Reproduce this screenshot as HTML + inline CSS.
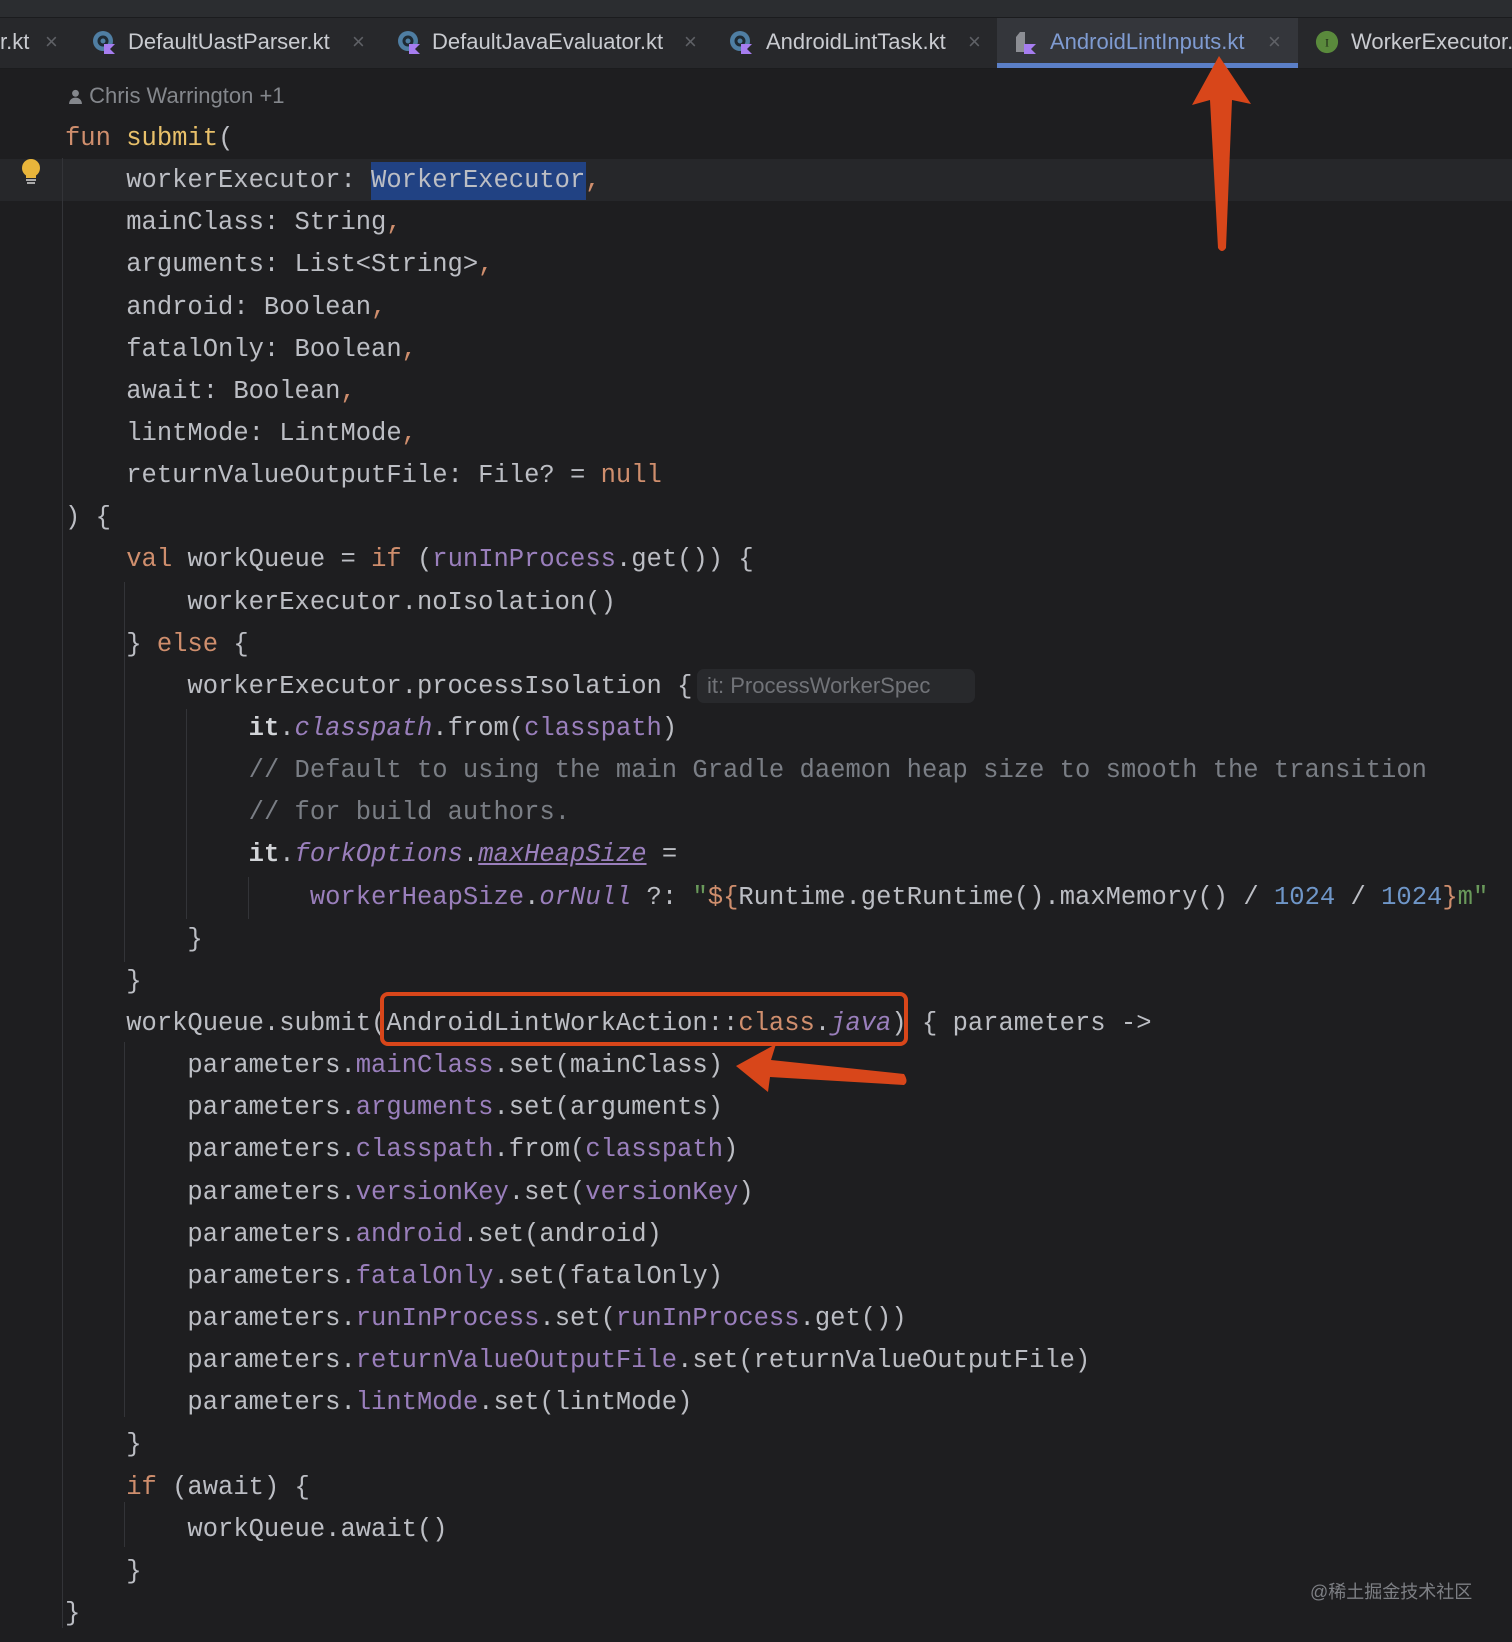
<!DOCTYPE html>
<html><head><meta charset="utf-8"><style>
html,body{margin:0;padding:0}
body{width:1512px;height:1642px;background:#1e1e20;position:relative;overflow:hidden;font-family:"Liberation Mono",monospace;}
.top{position:absolute;left:0;top:0;width:1512px;height:17px;background:#2b2d30;border-bottom:1px solid #1b1c1e}
.tabs{position:absolute;left:0;top:18px;width:1512px;height:50px;background:#27282b;border-bottom:1px solid #1b1c1e}
.tab{position:absolute;top:0;height:50px;line-height:48px;font-family:"Liberation Sans",sans-serif;font-size:22px;color:#c9cbd0;white-space:nowrap}
.x{position:absolute;top:0;font-family:"Liberation Sans",sans-serif;font-size:22px;color:#5f6166;line-height:48px}
.ic{position:absolute;top:12px;width:24px;height:24px}
.ln{position:absolute;left:65px;margin-top:2px;height:42px;line-height:42px;font-size:25.5px;color:#bcbec4;white-space:pre}
.k{color:#cf8e6d}.f{color:#e8c06a}.p{color:#9a7fbc}.pi{color:#9a7fbc;font-style:italic}
.c{color:#7a7e85}.n{color:#6f96c8}.s{color:#6a9a5b}.b{font-weight:bold;color:#d2d4d8}
.g{position:absolute;width:1px;background:#333438}
</style></head><body>
<div class="top"></div>
<div class="tabs"></div>
<div style="position:absolute;left:997px;top:18px;width:301px;height:50px;background:#34363b"></div>
<div style="position:absolute;left:997px;top:63px;width:301px;height:5px;background:#5b7fc7"></div>

<div class="tab" style="left:0;top:18px">r.kt</div><div class="x" style="left:45px;top:18px">×</div>
<svg class="ic" style="left:92px;top:30px" viewBox="0 0 24 24"><circle cx="11" cy="11" r="10" fill="#4f7ea3"/><circle cx="11" cy="11" r="4" fill="none" stroke="#1e2a33" stroke-width="3"/><path d="M12 14h11l-5 5 5 5H12z" fill="#a67df0"/></svg>
<div class="tab" style="left:128px;top:18px">DefaultUastParser.kt</div><div class="x" style="left:352px;top:18px">×</div>
<svg class="ic" style="left:397px;top:30px" viewBox="0 0 24 24"><circle cx="11" cy="11" r="10" fill="#4f7ea3"/><circle cx="11" cy="11" r="4" fill="none" stroke="#1e2a33" stroke-width="3"/><path d="M12 14h11l-5 5 5 5H12z" fill="#a67df0"/></svg>
<div class="tab" style="left:432px;top:18px">DefaultJavaEvaluator.kt</div><div class="x" style="left:684px;top:18px">×</div>
<svg class="ic" style="left:729px;top:30px" viewBox="0 0 24 24"><circle cx="11" cy="11" r="10" fill="#4f7ea3"/><circle cx="11" cy="11" r="4" fill="none" stroke="#1e2a33" stroke-width="3"/><path d="M12 14h11l-5 5 5 5H12z" fill="#a67df0"/></svg>
<div class="tab" style="left:766px;top:18px">AndroidLintTask.kt</div><div class="x" style="left:968px;top:18px">×</div>
<svg class="ic" style="left:1014px;top:30px" viewBox="0 0 24 24"><path d="M6 2h5v20H2V7z" fill="#8c8e94"/><path d="M10 14h12l-5 5 5 5H10z" fill="#a67df0"/></svg>
<div class="tab" style="left:1050px;top:18px;color:#7f9bd1">AndroidLintInputs.kt</div><div class="x" style="left:1268px;top:18px">×</div>
<svg class="ic" style="left:1315px;top:30px" viewBox="0 0 26 26"><circle cx="13" cy="13" r="12" fill="#5a8a3c"/><text x="13" y="18" font-size="13" text-anchor="middle" fill="#1e2a17" font-family="Liberation Serif,serif">I</text></svg>
<div class="tab" style="left:1351px;top:18px">WorkerExecutor.kt</div>

<div style="position:absolute;left:0;top:159px;width:1512px;height:42px;background:#26272a"></div>
<svg style="position:absolute;left:20px;top:158px" width="22" height="30" viewBox="0 0 22 30"><circle cx="11" cy="10" r="9" fill="#e8b53b"/><rect x="6" y="17" width="10" height="3" fill="#e8b53b"/><rect x="6" y="21" width="10" height="2" fill="#aaa"/><rect x="7" y="24" width="8" height="2" fill="#aaa"/></svg>
<div style="position:absolute;left:371px;top:162px;width:215px;height:38px;background:#214283"></div>

<div class="g" style="left:62px;top:158px;height:1470px"></div>
<div class="g" style="left:124px;top:582px;height:380px"></div>
<div class="g" style="left:124px;top:1042px;height:375px"></div>
<div class="g" style="left:124px;top:1502px;height:45px"></div>
<div class="g" style="left:186px;top:709px;height:210px"></div>
<div class="g" style="left:248px;top:877px;height:42px"></div>

<div style="position:absolute;left:68px;top:83px;font-family:'Liberation Sans',sans-serif;font-size:22px;color:#84878c">
<svg width="15" height="15" viewBox="0 0 14 14" style="vertical-align:-1px"><circle cx="7" cy="4" r="3.2" fill="#84878c"/><path d="M1 14c0-4 3-6 6-6s6 2 6 6z" fill="#84878c"/></svg> Chris Warrington +1</div>

<div class="ln" style="top:116px"><span class="k">fun</span> <span class="f">submit</span>(</div>
<div class="ln" style="top:158px">    workerExecutor: WorkerExecutor<span class="k">,</span></div>
<div class="ln" style="top:200px">    mainClass: String<span class="k">,</span></div>
<div class="ln" style="top:242px">    arguments: List&lt;String&gt;<span class="k">,</span></div>
<div class="ln" style="top:285px">    android: Boolean<span class="k">,</span></div>
<div class="ln" style="top:327px">    fatalOnly: Boolean<span class="k">,</span></div>
<div class="ln" style="top:369px">    await: Boolean<span class="k">,</span></div>
<div class="ln" style="top:411px">    lintMode: LintMode<span class="k">,</span></div>
<div class="ln" style="top:453px">    returnValueOutputFile: File? = <span class="k">null</span></div>
<div class="ln" style="top:495px">) {</div>
<div class="ln" style="top:537px">    <span class="k">val</span> workQueue = <span class="k">if</span> (<span class="p">runInProcess</span>.get()) {</div>
<div class="ln" style="top:580px">        workerExecutor.noIsolation()</div>
<div class="ln" style="top:622px">    } <span class="k">else</span> {</div>
<div class="ln" style="top:664px">        workerExecutor.processIsolation { </div>
<div style="position:absolute;left:697px;top:669px;width:278px;height:34px;border-radius:7px;background:#28292c;font-family:'Liberation Sans',sans-serif;font-size:22px;color:#717378;line-height:34px;padding-left:10px;box-sizing:border-box">it: ProcessWorkerSpec</div>
<div class="ln" style="top:706px">            <span class="b">it</span>.<span class="pi">classpath</span>.from(<span class="p">classpath</span>)</div>
<div class="ln" style="top:748px">            <span class="c">// Default to using the main Gradle daemon heap size to smooth the transition</span></div>
<div class="ln" style="top:790px">            <span class="c">// for build authors.</span></div>
<div class="ln" style="top:832px">            <span class="b">it</span>.<span class="pi">forkOptions</span>.<span class="pi" style="text-decoration:underline">maxHeapSize</span> =</div>
<div class="ln" style="top:875px">                <span class="p">workerHeapSize</span>.<span class="pi">orNull</span> ?: <span class="s">"</span><span class="k">${</span>Runtime.getRuntime().maxMemory() / <span class="n">1024</span> / <span class="n">1024</span><span class="k">}</span><span class="s">m"</span></div>
<div class="ln" style="top:917px">        }</div>
<div class="ln" style="top:959px">    }</div>
<div class="ln" style="top:1001px">    workQueue.submit(AndroidLintWorkAction::<span class="k">class</span>.<span class="pi">java</span>) { parameters -&gt;</div>
<div class="ln" style="top:1043px">        parameters.<span class="p">mainClass</span>.set(mainClass)</div>
<div class="ln" style="top:1085px">        parameters.<span class="p">arguments</span>.set(arguments)</div>
<div class="ln" style="top:1127px">        parameters.<span class="p">classpath</span>.from(<span class="p">classpath</span>)</div>
<div class="ln" style="top:1170px">        parameters.<span class="p">versionKey</span>.set(<span class="p">versionKey</span>)</div>
<div class="ln" style="top:1212px">        parameters.<span class="p">android</span>.set(android)</div>
<div class="ln" style="top:1254px">        parameters.<span class="p">fatalOnly</span>.set(fatalOnly)</div>
<div class="ln" style="top:1296px">        parameters.<span class="p">runInProcess</span>.set(<span class="p">runInProcess</span>.get())</div>
<div class="ln" style="top:1338px">        parameters.<span class="p">returnValueOutputFile</span>.set(returnValueOutputFile)</div>
<div class="ln" style="top:1380px">        parameters.<span class="p">lintMode</span>.set(lintMode)</div>
<div class="ln" style="top:1422px">    }</div>
<div class="ln" style="top:1465px">    <span class="k">if</span> (await) {</div>
<div class="ln" style="top:1507px">        workQueue.await()</div>
<div class="ln" style="top:1549px">    }</div>
<div class="ln" style="top:1591px">}</div>

<div style="position:absolute;left:380px;top:992px;width:528px;height:54px;border:4px solid #d8461a;border-radius:8px;box-sizing:border-box"></div>
<svg style="position:absolute;left:0;top:0" width="1512" height="1642">
<path d="M1219 56 L1251 104 L1232 100 L1226 248 Q1222 254 1218 248 L1210 100 L1192 105 Z" fill="#d8461a"/>
<path d="M736 1066 L776 1044 L771 1060 L904 1074 Q909 1082 904 1085 L770 1077 L768 1092 Z" fill="#d8461a"/>
</svg>
<div style="position:absolute;left:1310px;top:1578px;font-family:'Liberation Sans','Noto Sans CJK SC',sans-serif;font-size:18px;color:#7d7f84">@稀土掘金技术社区</div>
</body></html>
